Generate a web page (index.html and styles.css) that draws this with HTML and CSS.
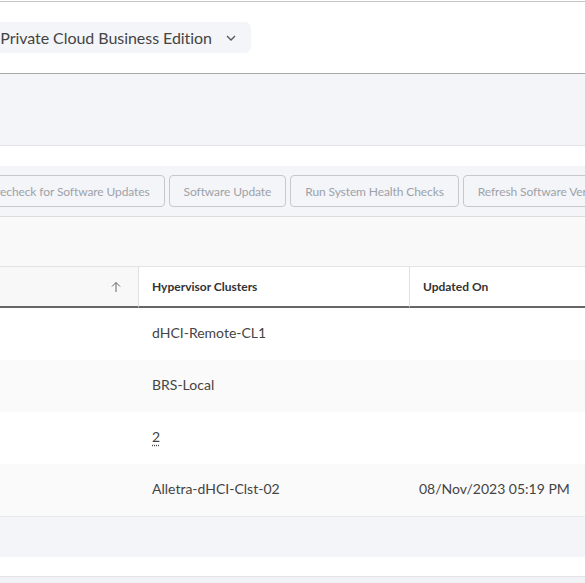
FILE: index.html
```html
<!DOCTYPE html>
<html>
<head>
<meta charset="utf-8">
<link rel="stylesheet" href="styles.css">
</head>
<body>
<div class="page">
  <div class="topline"></div>
  <div class="header">
    <div class="pill">
      <span class="pill-text">HPE GreenLake for Private Cloud Business Edition</span>
      <svg class="chev" width="10" height="6" viewBox="0 0 10 6"><path d="M1 1 L5 5 L9 1" fill="none" stroke="#555" stroke-width="1.3"/></svg>
    </div>
  </div>
  <div class="band1"></div>
  <div class="spacer"></div>
  <div class="toolbar">
    <button class="btn b1">Precheck for Software Updates</button>
    <button class="btn">Software Update</button>
    <button class="btn">Run System Health Checks</button>
    <button class="btn">Refresh Software Versions</button>
  </div>
  <div class="band2"></div>
  <div class="table">
    <div class="th sorted">
      <svg class="sort" width="10" height="12" viewBox="0 0 10 12"><path d="M5 11 V1.5 M1 5.5 L5 1.5 L9 5.5" fill="none" stroke="#666" stroke-width="1"/></svg>
    </div>
    <div class="th bl">Hypervisor Clusters</div>
    <div class="th bl">Updated On</div>

    <div class="td"></div><div class="td">dHCI-Remote-CL1</div><div class="td"></div>
    <div class="td alt"></div><div class="td alt">BRS-Local</div><div class="td alt"></div>
    <div class="td"></div><div class="td"><span class="dotted">2</span></div><div class="td"></div>
    <div class="td alt"></div><div class="td alt">Alletra-dHCI-Clst-02</div><div class="td alt date">08/Nov/2023 05:19 PM</div>
  </div>
  <div class="band3"></div>
  <div class="spacer2"></div>
  <div class="bottom"></div>
</div>
</body>
</html>
```
FILE: styles.css
```css
html, body {
  margin: 0;
  padding: 0;
  background: #fff;
  overflow: hidden;
}
.page {
  width: 585px;
  height: 583px;
  overflow: hidden;
  font-family: Lato, "Liberation Sans", sans-serif;
  color: #444;
}
.topline {
  margin-top: 1px;
  height: 1px;
  background: #c4c4c4;
}
.header {
  height: 71px;
  border-bottom: 1px solid #a9a9a9;
  position: relative;
}
.pill {
  position: absolute;
  right: 334px;
  top: 20px;
  height: 31px;
  display: flex;
  align-items: center;
  gap: 14px;
  padding: 0 15px 0 16px;
  background: #f4f5f8;
  border-radius: 6px;
  white-space: nowrap;
}
.pill-text {
  font-size: 16px;
  letter-spacing: -0.05px;
  color: #444;
}
.chev { display: block; margin-top: 1px; }
.band1 {
  height: 71px;
  background: #f4f5f9;
  border-bottom: 1px solid #e3e4e8;
}
.spacer { height: 20px; }
.toolbar {
  height: 51px;
  background: #f4f5f8;
  border-bottom: 1px solid #dcdcdc;
  display: flex;
  align-items: flex-start;
  gap: 4px;
  padding-top: 9px;
  box-sizing: border-box;
  margin-left: -26px;
  white-space: nowrap;
}
.btn {
  height: 32px;
  padding: 0 14px;
  border: 1px solid #c5c9cf;
  border-radius: 4px;
  background: #f4f5f8;
  color: #9da2a8;
  font-family: Lato, "Liberation Sans", sans-serif;
  font-size: 12px;
  letter-spacing: -0.1px;
  flex: none;
}
.band2 {
  height: 49px;
  background: #f9f9f9;
  border-bottom: 1px solid #e4e4e4;
}
.table {
  display: grid;
  grid-template-columns: 138px 271px 1fr;
}
.th {
  height: 39px;
  border-bottom: 2px solid #666;
  display: flex;
  align-items: center;
  padding-left: 13px;
  font-size: 12px;
  font-weight: bold;
  color: #333;
}
.th.sorted {
  background: #f8f8f8;
  justify-content: flex-end;
  padding-right: 17px;
}
.bl { border-left: 1px solid #e0e0e0; }
.sort { display: block; }
.td {
  height: 52px;
  box-sizing: border-box;
  padding-bottom: 4px;
  display: flex;
  align-items: center;
  padding-left: 14px;
  font-size: 14px;
  color: #444;
  white-space: nowrap;
}
.td.alt { background: #fafafa; }
.td.date { padding-left: 10px; }
.dotted {
  text-decoration: underline dotted #444;
  text-underline-offset: 3px;
}
.band3 {
  border-top: 1px solid #e8e8e8;
  height: 40px;
  background: #f4f5f8;
}
.spacer2 { height: 19px; }
.bottom {
  border-top: 1px solid #e2e3e6;
  height: 10px;
  background: #f1f2f5;
}
```
